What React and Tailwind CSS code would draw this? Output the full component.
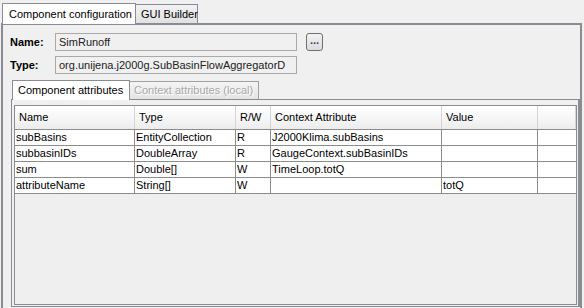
import React from "react";

const rows = [
  ["subBasins", "EntityCollection", "R", "J2000Klima.subBasins", ""],
  ["subbasinIDs", "DoubleArray", "R", "GaugeContext.subBasinIDs", ""],
  ["sum", "Double[]", "W", "TimeLoop.totQ", ""],
  ["attributeName", "String[]", "W", "", "totQ"],
];

const cols = ["w-[120px]", "w-[101px]", "w-[35px]", "w-[171px]", "w-[96px]", "flex-1"];
const heads = ["Name", "Type", "R/W", "Context Attribute", "Value", ""];

function Field({ value }) {
  return (
    <div className="w-[242px] h-[18px] shrink-0 border border-[#a9a9a9] bg-[#f0f0f0] flex items-center pl-[3px] text-[#222] whitespace-nowrap">
      {value}
    </div>
  );
}

export default function App() {
  return (
    <div
      className="w-[584px] h-[308px] bg-[#f0f0f0] overflow-hidden text-[11px] text-black whitespace-nowrap"
      style={{ fontFamily: '"Liberation Sans", Arial, sans-serif' }}
    >
      {/* outer tabs */}
      <div className="flex items-end h-[23px] pl-[2px] pt-[2px]">
        <div className="w-[134px] h-[21px] shrink-0 bg-white border border-b-0 border-[#898c95] flex items-center pl-[6px] relative top-[1px]">
          Component configuration
        </div>
        <div className="w-[62px] h-[19px] shrink-0 bg-gradient-to-b from-[#f2f2f2] to-[#e1e1e1] border border-l-0 border-b-0 border-[#898c95] flex items-center pl-[5px]">
          GUI Builder
        </div>
      </div>

      {/* outer panel */}
      <div className="ml-[1px] mr-[2px] h-[300px] border-2 border-b-0 border-[#8a8c93] pt-[8px] pl-[7px]">
        <div className="flex items-center gap-[7px]">
          <span className="w-[38px] font-bold">Name:</span>
          <Field value="SimRunoff" />
          <div className="ml-[2px] w-[17px] h-[18px] rounded-[3px] border border-[#707070] bg-gradient-to-b from-[#f2f2f2] to-[#dcdcdc] flex items-center justify-center font-bold leading-none pb-[3px] text-[#2b3a70]">
            ...
          </div>
        </div>
        <div className="flex items-center gap-[7px] mt-[5px]">
          <span className="w-[38px] font-bold">Type:</span>
          <Field value="org.unijena.j2000g.SubBasinFlowAggregatorD" />
        </div>

        {/* inner tabs */}
        <div className="flex items-end h-[20px] mt-[5px] pl-[2px]">
          <div className="w-[118px] h-[20px] shrink-0 bg-white border border-b-0 border-[#898c95] flex items-center pl-[5px] relative top-[1px]">
            Component attributes
          </div>
          <div
            className="w-[129px] h-[18px] shrink-0 bg-gradient-to-b from-[#f4f4f4] to-[#e4e4e4] border border-l-0 border-b-0 border-[#a0a0a0] flex items-center pl-[4px] text-[#a8a8a8]"
            style={{ textShadow: "1px 1px 0 #ffffff" }}
          >
            Context attributes (local)
          </div>
        </div>

        {/* inner panel */}
        <div className="ml-[1px] h-[208px] border border-[#898c95] border-r-2 border-r-[#8a8c93] pl-[2px] pt-[5px] pr-[1px] pb-[1px] bg-[#f0f0f0]">
          <div className="h-full border border-[#8c8c8c] bg-[#efefef] flex flex-col">
            {/* header */}
            <div className="flex h-[24px] shrink-0 bg-gradient-to-b from-white via-[#f7f7f7] to-[#ececec] border-b border-[#8c8c8c]">
              {heads.map((h, i) => (
                <div
                  key={i}
                  className={`${cols[i]} shrink-0 h-full flex items-center pl-[4px] border-r border-[#d5d5d5]`}
                >
                  {h}
                </div>
              ))}
            </div>
            {rows.map((r, ri) => (
              <div key={ri} className="flex h-[16px] shrink-0 bg-white border-b border-[#8c8c8c]">
                {[...r, ""].map((c, ci) => (
                  <div
                    key={ci}
                    className={`${cols[ci]} shrink-0 h-full flex items-center pl-[1px] border-r border-[#8c8c8c] ${ci === 5 ? "border-r-0" : ""}`}
                  >
                    {c}
                  </div>
                ))}
              </div>
            ))}
          </div>
        </div>
      </div>
    </div>
  );
}
